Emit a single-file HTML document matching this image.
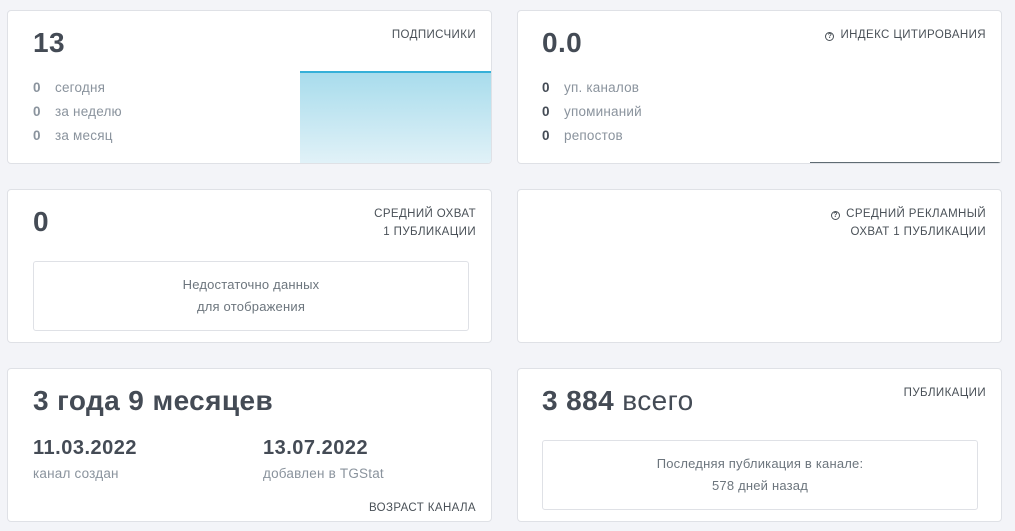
<!DOCTYPE html>
<html><head><meta charset="utf-8"><style>
*{margin:0;padding:0;box-sizing:border-box}
body{width:1015px;height:531px;background:#f3f4f8;font-family:"Liberation Sans",sans-serif;position:relative;overflow:hidden;color:#495057}
.c{position:absolute;background:#fff;border:1px solid #dfe1e6;border-radius:4px;width:485px;height:154px;overflow:hidden}
.a{position:absolute}
.big{font-size:28px;font-weight:bold;color:#444b55;letter-spacing:.4px}
.lab{font-size:11.5px;color:#495057;text-align:right;line-height:18px;letter-spacing:.4px}
.row{font-size:13.5px;color:#8a939d;letter-spacing:.2px}
.row b{display:inline-block;width:22px;font-weight:bold}
.box{position:absolute;border:1px solid #dfe1e6;border-radius:3px;text-align:center;font-size:13px;color:#6c757d;line-height:22px;letter-spacing:.2px}
.q{display:inline-block;width:9px;height:9px;border:1.2px solid #495057;border-radius:50%;font-size:7px;line-height:7px;text-align:center;vertical-align:0px;margin-right:6px;font-weight:bold}
</style></head><body>
<div class="c" style="left:7px;top:10px">
 <div class="a big" style="left:25px;top:16px">13</div>
 <div class="a lab" style="right:15px;top:15px">ПОДПИСЧИКИ</div>
 <div class="a row" style="left:25px;top:65px;line-height:24px"><div><b>0</b>сегодня</div><div><b>0</b>за неделю</div><div><b>0</b>за месяц</div></div>
 <div class="a" style="left:292px;top:60px;width:193px;height:94px;border-top:2px solid #35b0d8;background:linear-gradient(#a8dcec,#e2f2f8)"></div>
</div>
<div class="c" style="left:517px;top:10px">
 <div class="a big" style="left:24px;top:16px">0.0</div>
 <div class="a lab" style="right:15px;top:15px"><span class="q">?</span>ИНДЕКС ЦИТИРОВАНИЯ</div>
 <div class="a row" style="left:24px;top:65px;line-height:24px"><div><b style="color:#444b55">0</b>уп. каналов</div><div><b style="color:#444b55">0</b>упоминаний</div><div><b style="color:#444b55">0</b>репостов</div></div>
 <div class="a" style="left:292px;top:151px;width:193px;height:1px;background:#5f6b73"></div>
</div>
<div class="c" style="left:7px;top:189px">
 <div class="a big" style="left:25px;top:16px">0</div>
 <div class="a lab" style="right:15px;top:15px">СРЕДНИЙ ОХВАТ<br>1 ПУБЛИКАЦИИ</div>
 <div class="box" style="left:25px;top:71px;width:436px;height:70px;padding-top:12px">Недостаточно данных<br>для отображения</div>
</div>
<div class="c" style="left:517px;top:189px">
 <div class="a lab" style="right:15px;top:15px"><span class="q">?</span>СРЕДНИЙ РЕКЛАМНЫЙ<br>ОХВАТ 1 ПУБЛИКАЦИИ</div>
</div>
<div class="c" style="left:7px;top:368px">
 <div class="a big" style="left:25px;top:16px">3 года 9 месяцев</div>
 <div class="a" style="left:25px;top:68px;font-size:20px;font-weight:bold;color:#444b55;letter-spacing:.5px">11.03.2022</div>
 <div class="a row" style="left:25px;top:97px">канал создан</div>
 <div class="a" style="left:255px;top:68px;font-size:20px;font-weight:bold;color:#444b55;letter-spacing:.5px">13.07.2022</div>
 <div class="a row" style="left:255px;top:97px">добавлен в TGStat</div>
 <div class="a lab" style="right:15px;top:130px">ВОЗРАСТ КАНАЛА</div>
</div>
<div class="c" style="left:517px;top:368px">
 <div class="a big" style="left:24px;top:16px">3 884 <span style="font-weight:normal">всего</span></div>
 <div class="a lab" style="right:15px;top:15px">ПУБЛИКАЦИИ</div>
 <div class="box" style="left:24px;top:71px;width:436px;height:70px;padding-top:12px">Последняя публикация в канале:<br>578 дней назад</div>
</div>
</body></html>
